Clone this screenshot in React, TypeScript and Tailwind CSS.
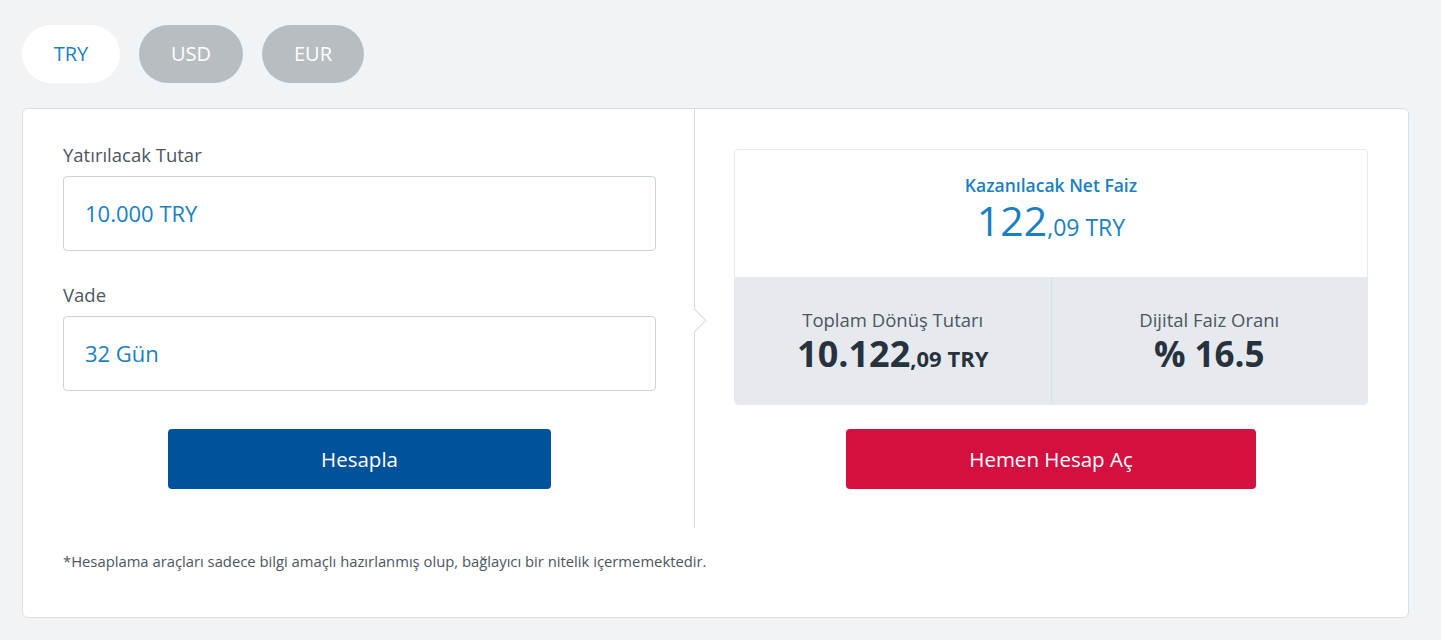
import React from "react";

export default function App() {
  const font = { fontFamily: '"Open Sans", "Noto Sans", Arial, sans-serif' };
  return (
    <div className="min-h-[640px] w-full bg-[#f1f4f7] px-[22px] pt-[25px] pb-[21px]" style={font}>
      <div className="flex gap-[19px]">
        <button className="h-[58px] w-[98px] rounded-full bg-white text-[20px] text-[#1a7fc1]">TRY</button>
        <button className="h-[58px] w-[104px] rounded-full bg-[#b8bdc2] text-[20px] text-white">USD</button>
        <button className="h-[58px] w-[102px] rounded-full bg-[#b8bdc2] text-[20px] text-white">EUR</button>
      </div>

      <div className="mt-[25px] w-[1387px] rounded-[6px] border border-[#d9dee3] bg-white">
        <div className="flex">
          <div className="relative w-[672px] border-r border-[#d5dbe1] pl-[40px] pr-[38px] pt-[34px] pb-[39px]">
            <div className="text-[18.5px] leading-6 text-[#4b5661]">Yatırılacak Tutar</div>
            <div className="mt-[9px] flex h-[75px] items-center rounded-[4px] border border-[#ccd3da] px-[21px] text-[22px] text-[#1a7fc1]">
              10.000 TRY
            </div>
            <div className="mt-[32px] text-[18.5px] leading-6 text-[#4b5661]">Vade</div>
            <div className="mt-[9px] flex h-[75px] items-center rounded-[4px] border border-[#ccd3da] px-[21px] text-[22px] text-[#1a7fc1]">
              32 Gün
            </div>
            <div className="mt-[38px] flex justify-center">
              <button className="h-[60px] w-[383px] rounded-[4px] bg-[#00529b] text-[20.5px] text-white">Hesapla</button>
            </div>
            <div className="absolute right-[-9px] top-[203px] h-[17px] w-[17px] rotate-45 border-r border-t border-[#d5dbe1] bg-white" />
          </div>

          <div className="flex-1 pl-[39px] pr-[40px] pt-[40px]">
            <div className="overflow-hidden rounded-[4px] border border-[#e6eaee]">
              <div className="flex h-[127px] flex-col items-center pt-[24px]">
                <div className="text-[17.5px] font-semibold leading-[22px] text-[#1a7fc1]">Kazanılacak Net Faiz</div>
                <div className="text-[#1a7fc1] leading-[48px]">
                  <span className="text-[41px]">122</span>
                  <span className="text-[23px]">,09 TRY</span>
                </div>
              </div>
              <div className="flex h-[127px] bg-[#e6eaee]">
                <div className="flex flex-1 flex-col items-center border-r border-[#d9dee3] pt-[31px]">
                  <div className="text-[18.5px] leading-6 text-[#4b5661]">Toplam Dönüş Tutarı</div>
                  <div className="font-bold text-[#27323d] leading-[44px]">
                    <span className="text-[36px]">10.122</span>
                    <span className="text-[22px]">,09 TRY</span>
                  </div>
                </div>
                <div className="flex flex-1 flex-col items-center pt-[31px]">
                  <div className="text-[18.5px] leading-6 text-[#4b5661]">Dijital Faiz Oranı</div>
                  <div className="text-[35px] font-bold leading-[44px] text-[#27323d]">% 16.5</div>
                </div>
              </div>
            </div>
            <div className="mt-[24px] flex justify-center">
              <button className="h-[60px] w-[410px] rounded-[4px] bg-[#d31141] text-[20.5px] text-white">Hemen Hesap Aç</button>
            </div>
          </div>
        </div>
        <div className="px-[40px] pt-[23px] pb-[46px] text-[14.8px] leading-5 text-[#4b5661]">
          *Hesaplama araçları sadece bilgi amaçlı hazırlanmış olup, bağlayıcı bir nitelik içermemektedir.
        </div>
      </div>
    </div>
  );
}
